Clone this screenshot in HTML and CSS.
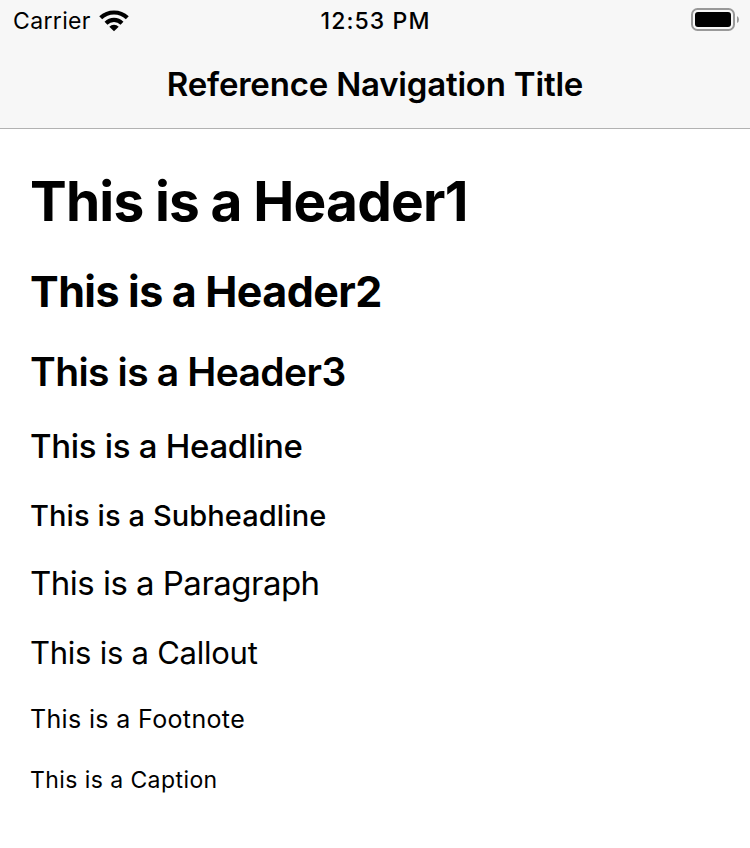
FILE: index.html
```html
<!DOCTYPE html>
<html lang="en">
<head>
<meta charset="utf-8">
<title>Typography</title>
<link rel="stylesheet" href="styles.css">
</head>
<body>
<header class="top">
  <div class="status">
    <div class="carrier"><span>Carrier</span>
      <svg class="wifi" width="30" height="23" viewBox="0 0 30 23"><path d="M15 22.200l-4.700-4.500q1.900-1.900 4.700-1.900t4.700 1.900z"/><path class="arc" d="M7 14.200a11.500 11.500 0 0 1 16 0M1.700 8.800a19.300 19.300 0 0 1 26.600 0"/></svg>
    </div>
    <div class="time">12:53 PM</div>
    <svg class="battery" width="50" height="24" viewBox="0 0 50 24"><rect class="shell" x="2" y="1" width="42" height="21" rx="5.500"/><rect x="5" y="4" width="36" height="15" rx="3"/><path class="cap" d="M47 8q2 1 2 3.500t-2 3.500z"/></svg>
  </div>
  <h1 class="title">Reference Navigation Title</h1>
</header>
<main class="content">
  <p class="h1">This is a Header1</p>
  <p class="h2">This is a Header2</p>
  <p class="h3">This is a Header3</p>
  <p class="headline">This is a Headline</p>
  <p class="subheadline">This is a Subheadline</p>
  <p class="paragraph">This is a Paragraph</p>
  <p class="callout">This is a Callout</p>
  <p class="footnote">This is a Footnote</p>
  <p class="caption">This is a Caption</p>
</main>
</body>
</html>
```
FILE: styles.css
```css
* { box-sizing: border-box; margin: 0; padding: 0; }
body { background: #fff; color: #000; font-family: Inter, sans-serif; }
.top { height: 129px; background: #f7f7f7; border-bottom: 1px solid #b2b2b2; }
.status { display: grid; grid-template-columns: 1fr auto 1fr; height: 40px; padding: 1px 10px 0 13px; align-items: center; font-size: 23px; }
.carrier { display: flex; align-items: center; gap: 8px; letter-spacing: .35px; }
.wifi { margin-bottom: 1px; }
.time { font-weight: 500; letter-spacing: 1.1px; margin-left: -2px; }
.battery { justify-self: end; margin-bottom: 2px; }
.arc { fill: none; stroke: #000; stroke-width: 4.200; }
.shell { fill: none; stroke: #999; stroke-width: 2; }
.cap { fill: #999; }
.title { text-align: center; font-size: 33px; font-weight: 600; line-height: 40px; margin-top: 24px; letter-spacing: -.2px; }
.content { padding: 34px 30px; white-space: nowrap; }
.h1 { font-size: 55px; line-height: 76px; font-weight: 700; letter-spacing: -.8px; word-spacing: -.7px; }
.h2 { font-size: 43px; line-height: 104px; font-weight: 700; letter-spacing: -.55px; word-spacing: -.6px; }
.h3 { font-size: 39px; line-height: 58px; font-weight: 600; letter-spacing: -.6px; word-spacing: -.5px; }
.headline { font-size: 33px; line-height: 90px; font-weight: 500; letter-spacing: -.3px; }
.subheadline { font-size: 29px; line-height: 50px; font-weight: 500; letter-spacing: .1px; }
.paragraph { font-size: 33px; line-height: 84px; letter-spacing: -.52px; }
.callout { font-size: 31px; line-height: 56px; letter-spacing: -.25px; }
.footnote { font-size: 25px; line-height: 76px; letter-spacing: .35px; }
.caption { font-size: 23px; line-height: 46px; letter-spacing: .42px; }
```
